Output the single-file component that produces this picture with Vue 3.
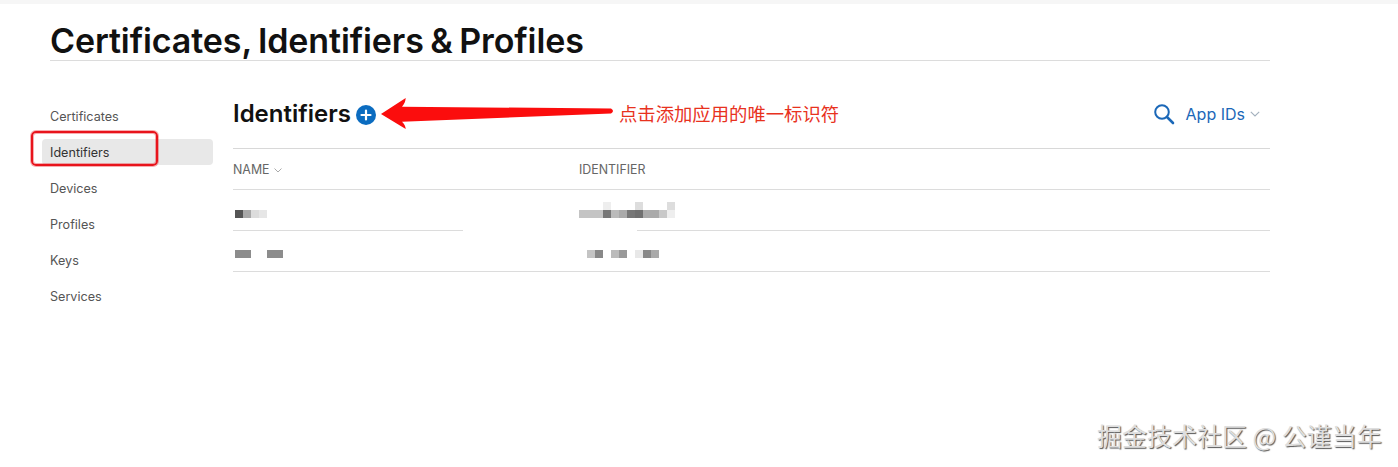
<script setup>
const navItems = ['Certificates', 'Identifiers', 'Devices', 'Profiles', 'Keys', 'Services']

// blurred-out values in the table, one colour per 8px cell
const rows = [
  {
    id: 1,
    name: [['#555', '#a8a8a8', '#dcdcdc', '#e6e6e6']],
    identifier: [
      ['', '', '', '#eee', '', '', '', '#ddd', '', '', '', '#ddd'],
      ['#c4c4c4', '#c4c4c4', '#c4c4c4', '#777', '#bbb', '#aaa', '#777', '#707070', '#aaa', '#aaa', '#c8c8c8', '#eee'],
    ],
  },
  {
    id: 2,
    name: [['#8c8c8c', '#8c8c8c', '', '', '#8c8c8c', '#8c8c8c']],
    identifier: [['', '#c4c4c4', '#888', '', '#bbb', '#999', '', '#e8e8e8', '#888', '#aaa']],
  },
]
</script>

<template>
  <div class="page">
    <div class="top-strip"></div>
    <div class="wrap">
      <h1 class="title">Certificates, Identifiers &amp; Profiles</h1>
      <div class="content">
        <ul class="nav">
          <li v-for="item in navItems" :key="item" :class="{ active: item === 'Identifiers' }">{{ item }}</li>
        </ul>
        <div class="main">
          <div class="main-header">
            <h2>Identifiers</h2>
            <svg class="plus" width="20" height="20" viewBox="0 0 20 20">
              <circle cx="10" cy="10" r="10" fill="#0b6cc0" />
              <path d="M10 5.500v9M5.500 10h9" stroke="#fff" stroke-width="2.200" stroke-linecap="round" />
            </svg>
            <div class="tools">
              <svg width="22" height="22" viewBox="0 0 22 22" fill="none" stroke="#1b68b8">
                <circle cx="9" cy="9" r="6.800" stroke-width="2" />
                <path d="M14 14l6 6" stroke-width="2.600" stroke-linecap="round" />
              </svg>
              <span class="filter">App IDs</span>
              <svg width="10" height="6" viewBox="0 0 10 6" fill="none" stroke="#a3b0bd" stroke-width="1.100">
                <path d="M.8.8L5 5l4.200-4.200" />
              </svg>
            </div>
          </div>
          <div class="table-head">
            <div class="col-name">
              NAME
              <svg width="8" height="5" viewBox="0 0 8 5" fill="none" stroke="#aaa" stroke-width="1">
                <path d="M.5.5L4 4 7.500.5" />
              </svg>
            </div>
            <div class="col-id">IDENTIFIER</div>
          </div>
          <div class="table-row" v-for="row in rows" :key="row.id" :class="'row-' + row.id">
            <div class="col-name">
              <div class="mosaic">
                <div class="mosaic-line" v-for="(line, i) in row.name" :key="i">
                  <i v-for="(c, j) in line" :key="j" :style="{ background: c }"></i>
                </div>
              </div>
            </div>
            <div class="col-id">
              <div class="mosaic">
                <div class="mosaic-line" v-for="(line, i) in row.identifier" :key="i">
                  <i v-for="(c, j) in line" :key="j" :style="{ background: c }"></i>
                </div>
              </div>
            </div>
            <div v-if="row.id === 1" class="line-gap"></div>
          </div>
        </div>
      </div>
    </div>

    <!-- annotations drawn on top of the screenshot -->
    <div class="mark"></div>
    <svg class="arrow" width="236" height="34" viewBox="0 0 236 34">
      <path d="M1 17L25.700 1C25.500 4 24.500 7 22 9.700L231 11.500Q235 14 231 16.500L22 24.700C24.500 27 25.500 29 25.700 32Z" fill="#fb0d0d" />
    </svg>
    <div class="note">点击添加应用的唯一标识符</div>
    <div class="watermark">掘金技术社区 @ 公谨当年</div>
  </div>
</template>

<style>
html, body {
  margin: 0;
  background: #fff;
}
</style>

<style scoped>
.page {
  position: relative;
  height: 467px;
  overflow: hidden;
  font-family: Inter, "Liberation Sans", sans-serif;
  color: #1d1d1f;
}
.top-strip {
  height: 4px;
  background: #f6f6f6;
}
.wrap {
  width: 1220px;
  margin-left: 50px;
}
.title {
  margin: 0;
  height: 56px;
  border-bottom: 1px solid #dcdcdc;
  font-size: 34px;
  line-height: 74px;
  font-weight: 600;
  letter-spacing: -0.1px;
  word-spacing: -2px;
  color: #111;
}
.content {
  display: flex;
  padding-top: 37px;
}
.nav {
  list-style: none;
  margin: 0 20px 0 -8px;
  padding: 5px 0 0;
  width: 171px;
}
.nav li {
  height: 26px;
  line-height: 27px;
  margin-bottom: 10px;
  padding-left: 8px;
  font-size: 12.6px;
  color: #555;
  border-radius: 4px;
}
.nav li.active {
  background: #e8e8e8;
  color: #333;
}
.main {
  flex: 1;
}
.main-header {
  display: flex;
  align-items: center;
  height: 47px;
  padding-bottom: 11px;
  border-bottom: 1px solid #d8d8d8;
  margin-top: -8px;
}
.main-header h2 {
  margin: 0;
  font-size: 24px;
  font-weight: 600;
  color: #111;
}
.plus {
  margin-left: 5px;
  margin-top: 2px;
}
.tools {
  margin-left: auto;
  margin-right: 10px;
  display: flex;
  align-items: center;
}
.filter {
  margin: 0 5px 0 11px;
  font-size: 16px;
  color: #1b68b8;
}
.table-head,
.table-row {
  position: relative;
  display: flex;
  box-sizing: border-box;
  height: 41px;
  border-bottom: 1px solid #dcdcdc;
  font-size: 12.4px;
  color: #666;
}
.table-head {
  align-items: center;
}
.table-row {
  align-items: flex-end;
  padding-bottom: 12px;
}
.table-row.row-2 {
  padding-bottom: 13px;
}
.col-name {
  width: 346px;
  box-sizing: border-box;
}
.col-name svg {
  vertical-align: 1px;
  margin-left: 1px;
}
.row-1 .col-name,
.row-2 .col-name {
  padding-left: 2px;
}
.mosaic-line {
  display: flex;
}
.mosaic-line i {
  display: block;
  width: 8px;
  height: 8px;
}
.line-gap {
  position: absolute;
  left: 230px;
  bottom: -1px;
  width: 174px;
  height: 1px;
  background: #fff;
}
.mark {
  position: absolute;
  left: 31px;
  top: 131px;
  width: 123px;
  height: 31px;
  border: 2px solid #e8141c;
  border-radius: 5px;
  box-shadow: 0 0 0 1px rgba(232, 20, 28, 0.35), inset 0 0 0 1px rgba(232, 20, 28, 0.35);
}
.arrow {
  position: absolute;
  left: 380px;
  top: 97px;
}
.note {
  position: absolute;
  left: 619px;
  top: 103px;
  font-family: "Noto Sans CJK SC", sans-serif;
  font-size: 18.35px;
  line-height: 20px;
  color: #e8321e;
  white-space: nowrap;
}
.watermark {
  position: absolute;
  left: 1097px;
  top: 419px;
  font-family: "Noto Sans CJK SC", sans-serif;
  font-size: 25px;
  line-height: 32px;
  color: #dedede;
  text-shadow: 1px 1px 1px #555;
  white-space: nowrap;
}
</style>
